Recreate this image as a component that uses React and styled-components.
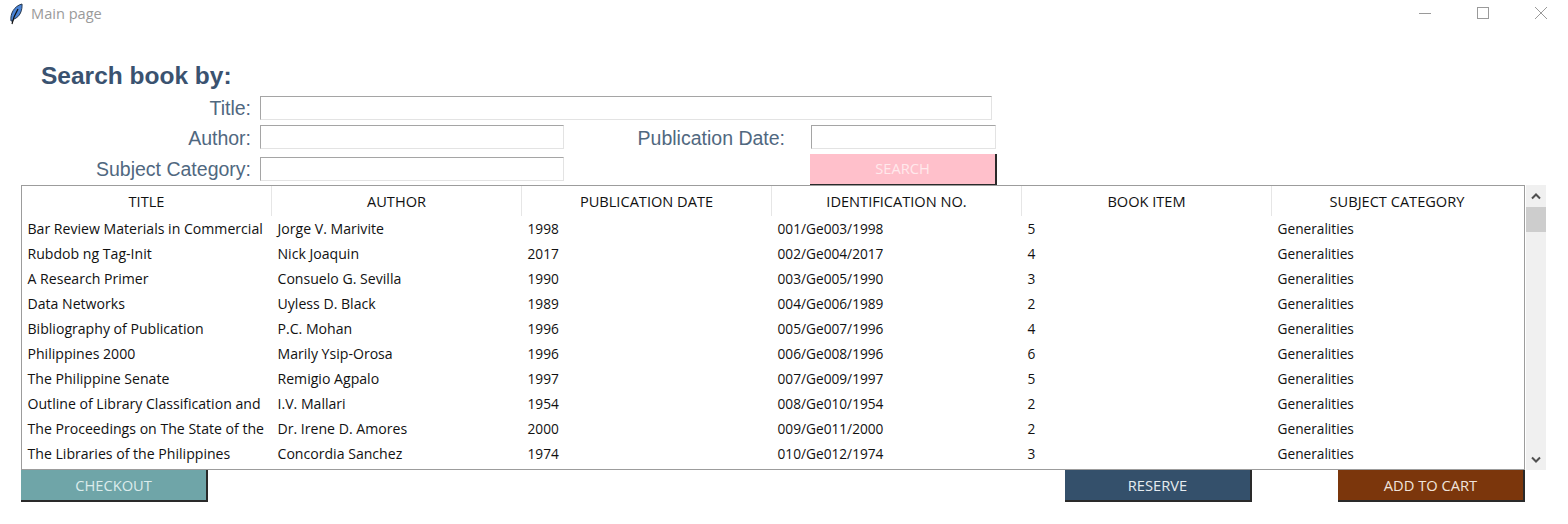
import React from "react";
import styled, { createGlobalStyle } from "styled-components";

const GlobalStyle = createGlobalStyle`
  html, body { margin: 0; padding: 0; background: #fff; }
  body { width: 1568px; height: 524px; overflow: hidden; font-family: "Liberation Sans", Arial, sans-serif; }
`;

const columns = [
  "TITLE",
  "AUTHOR",
  "PUBLICATION DATE",
  "IDENTIFICATION NO.",
  "BOOK ITEM",
  "SUBJECT CATEGORY",
];

const books = [
  ["Bar Review Materials in Commercial", "Jorge V. Marivite", "1998", "001/Ge003/1998", "5"],
  ["Rubdob ng Tag-Init", "Nick Joaquin", "2017", "002/Ge004/2017", "4"],
  ["A Research Primer", "Consuelo G. Sevilla", "1990", "003/Ge005/1990", "3"],
  ["Data Networks", "Uyless D. Black", "1989", "004/Ge006/1989", "2"],
  ["Bibliography of Publication", "P.C. Mohan", "1996", "005/Ge007/1996", "4"],
  ["Philippines 2000", "Marily Ysip-Orosa", "1996", "006/Ge008/1996", "6"],
  ["The Philippine Senate", "Remigio Agpalo", "1997", "007/Ge009/1997", "5"],
  ["Outline of Library Classification and", "I.V. Mallari", "1954", "008/Ge010/1954", "2"],
  ["The Proceedings on The State of the", "Dr. Irene D. Amores", "2000", "009/Ge011/2000", "2"],
  ["The Libraries of the Philippines", "Concordia Sanchez", "1974", "010/Ge012/1974", "3"],
];

const Window = styled.div`
  display: flex;
  flex-direction: column;
  width: 1568px;
  height: 524px;
`;

const TitleBar = styled.div`
  display: flex;
  align-items: center;
  height: 26px;
  padding-left: 8px;
  color: #9a9a9a;
  font-family: "Open Sans", sans-serif;
  font-size: 14.6px;
`;

const AppName = styled.span`
  margin-left: 8px;
`;

const WindowControls = styled.div`
  display: flex;
  align-items: center;
  gap: 46px;
  margin-left: auto;
  padding-right: 21px;
  svg { display: block; }
`;

const Heading = styled.h1`
  margin: 36px 0 0 41px;
  height: 34px;
  color: #3a5270;
  font-size: 24.5px;
  line-height: 27px;
  font-weight: 700;
`;

const SearchForm = styled.form`
  display: grid;
  grid-template-columns: 251px 305px 229px 186px;
  grid-template-rows: 29px 32px 28px;
  margin: 0;
`;

const Label = styled.label`
  margin-top: ${(p) => p.$drop || 0}px;
  color: #506880;
  font-size: 19.5px;
  line-height: 24px;
  text-align: right;
  white-space: nowrap;
`;

const TextInput = styled.input`
  box-sizing: border-box;
  margin-left: 9px;
  width: ${(p) => p.$width}px;
  height: 24px;
  padding: 0 2px;
  background: #fff;
  border: 1px solid #e3e3e3;
  border-top-color: #a5a5a5;
  border-left-color: #a5a5a5;
  outline: none;
`;

const TitleInput = styled(TextInput)`
  grid-column: 2 / 5;
`;

const DateLabel = styled(Label)`
  grid-column: 3;
`;

const DateInput = styled(TextInput)`
  margin-left: 26px;
`;

const ActionButton = styled.button`
  box-sizing: border-box;
  width: ${(p) => p.$width}px;
  height: 32px;
  padding: 0;
  border: none;
  border-right: 2px solid #2a2a2a;
  border-bottom: 2px solid #2a2a2a;
  background: ${(p) => p.$bg};
  color: ${(p) => p.$fg};
  font-family: "Open Sans", sans-serif;
  font-size: 14.7px;
  text-align: center;
`;

const SearchButton = styled(ActionButton)`
  grid-column: 4;
  margin: -3px 0 0 25px;
  padding-bottom: 2px;
`;

const TableArea = styled.div`
  display: flex;
  margin: 0 0 0 21px;
`;

const TableFrame = styled.div`
  box-sizing: border-box;
  width: 1504px;
  height: 285px;
  border: 1px solid #9c9c9c;
  overflow: hidden;
`;

const Table = styled.table`
  width: 1500px;
  table-layout: fixed;
  border-collapse: separate;
  border-spacing: 0;
  font-family: "Open Sans", sans-serif;
  font-size: 13.7px;
  color: #111;
`;

const HeadCell = styled.th`
  height: 30px;
  padding: 0;
  font-size: 14.6px;
  font-weight: 400;
  text-align: center;
  border-right: 1px solid #e6e6e6;
  &:last-child { border-right: none; }
`;

const Cell = styled.td`
  height: 25px;
  padding: 0 0 0 5.5px;
  white-space: nowrap;
  overflow: hidden;
  &:nth-child(-n + 2) { font-size: 14.1px; }
`;

const Scrollbar = styled.div`
  display: flex;
  flex-direction: column;
  box-sizing: border-box;
  width: 20px;
  height: 285px;
  margin-left: 1px;
  background: #f0f0f0;
`;

const ScrollArrow = styled.div`
  display: flex;
  align-items: center;
  justify-content: center;
  height: 22px;
  flex: none;
`;

const ScrollThumb = styled.div`
  height: 25px;
  flex: none;
  background: #cdcdcd;
`;

const ScrollTrack = styled.div`
  flex: 1;
`;

const Footer = styled.div`
  display: flex;
  width: 1504px;
  margin-left: 21px;
`;

const ReserveButton = styled(ActionButton)`
  margin-left: auto;
`;

const CartButton = styled(ActionButton)`
  margin-left: 86px;
`;

function FeatherIcon() {
  return (
    <svg width="15" height="24" viewBox="0 0 15 24" aria-hidden="true">
      <path d="M3 20 C2 13 6 5 14 3 C14.5 9 12 16 6 18 L4.5 20 Z" fill="#4a84d6" stroke="#26384f" strokeWidth="1" />
      <path d="M4 23 L6 16 L10 8" fill="none" stroke="#111" strokeWidth="1.2" />
    </svg>
  );
}

function MinimizeIcon() {
  return (
    <svg width="12" height="12" viewBox="0 0 12 12" aria-hidden="true">
      <path d="M0 6.5 H12" stroke="#9a9a9a" strokeWidth="1" />
    </svg>
  );
}

function MaximizeIcon() {
  return (
    <svg width="12" height="12" viewBox="0 0 12 12" aria-hidden="true">
      <rect x="0.5" y="0.5" width="11" height="11" fill="none" stroke="#9a9a9a" strokeWidth="1" />
    </svg>
  );
}

function CloseIcon() {
  return (
    <svg width="12" height="12" viewBox="0 0 12 12" aria-hidden="true">
      <path d="M0 0 L12 12 M12 0 L0 12" stroke="#9a9a9a" strokeWidth="1" />
    </svg>
  );
}

function Chevron({ up }) {
  return (
    <svg width="10" height="7" viewBox="0 0 10 7" aria-hidden="true">
      <path d={up ? "M1 5.5 L5 1.5 L9 5.5" : "M1 1.5 L5 5.5 L9 1.5"} fill="none" stroke="#505050" strokeWidth="2" />
    </svg>
  );
}

export default function App() {
  return (
    <Window>
      <GlobalStyle />
      <TitleBar>
        <FeatherIcon />
        <AppName>Main page</AppName>
        <WindowControls>
          <MinimizeIcon />
          <MaximizeIcon />
          <CloseIcon />
        </WindowControls>
      </TitleBar>
      <Heading>Search book by:</Heading>
      <SearchForm>
        <Label>Title:</Label>
        <TitleInput $width={732} />
        <Label $drop={1}>Author:</Label>
        <TextInput $width={304} />
        <DateLabel $drop={1}>Publication Date:</DateLabel>
        <DateInput $width={185} />
        <Label>Subject Category:</Label>
        <TextInput $width={304} />
        <SearchButton type="button" $width={187} $bg="#ffc0cb" $fg="#ffe9ec">SEARCH</SearchButton>
      </SearchForm>
      <TableArea>
        <TableFrame>
          <Table>
            <thead>
              <tr>
                {columns.map((name) => <HeadCell key={name}>{name}</HeadCell>)}
              </tr>
            </thead>
            <tbody>
              {books.map((book) => (
                <tr key={book[3]}>
                  {book.map((value, i) => <Cell key={i}>{value}</Cell>)}
                  <Cell>Generalities</Cell>
                </tr>
              ))}
            </tbody>
          </Table>
        </TableFrame>
        <Scrollbar>
          <ScrollArrow><Chevron up /></ScrollArrow>
          <ScrollThumb />
          <ScrollTrack />
          <ScrollArrow><Chevron /></ScrollArrow>
        </Scrollbar>
      </TableArea>
      <Footer>
        <ActionButton type="button" $width={187} $bg="#6fa5a8" $fg="#dcecec">CHECKOUT</ActionButton>
        <ReserveButton type="button" $width={187} $bg="#34506b" $fg="#e6ecf0">RESERVE</ReserveButton>
        <CartButton type="button" $width={187} $bg="#7b360c" $fg="#f0e4dc">ADD TO CART</CartButton>
      </Footer>
    </Window>
  );
}
